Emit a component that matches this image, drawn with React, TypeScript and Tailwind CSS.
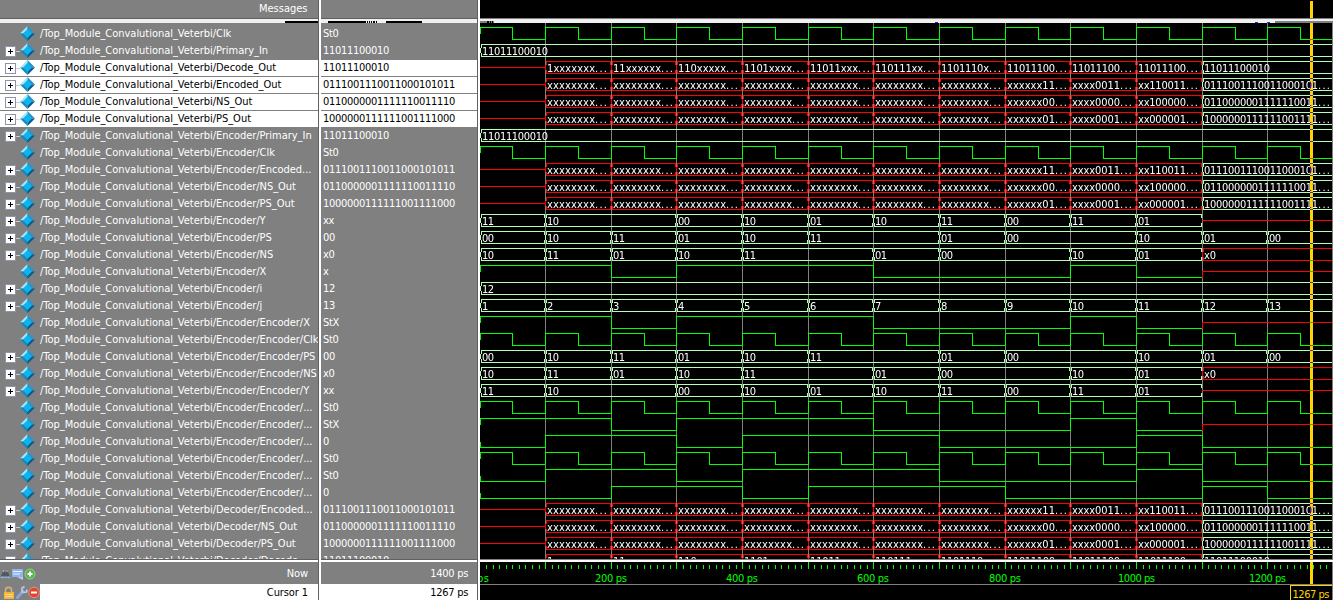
import React from "react";

const FONT = '"DejaVu Sans Condensed", "DejaVu Sans", sans-serif';
const TOP = "/Top_Module_Convalutional_Veterbi/";

type Seg = [number, string, boolean?];
type Wave =
  | { kind: "clk" }
  | { kind: "bit"; start: 0 | 1; edges: number[]; x?: number }
  | { kind: "bus"; segs: Seg[]; from?: number; xFrom?: number };

type Row = { name: string; value: string; wave: Wave; plus?: boolean; white?: boolean };

const clk: Wave = { kind: "clk" };
const xBit: Wave = { kind: "bit", start: 1, edges: [2, 3, 6, 9, 10], x: 11 };
const regA: Wave = { kind: "bit", start: 0, edges: [1, 3, 4, 7, 10, 11] };
const regB: Wave = { kind: "bit", start: 0, edges: [2, 4, 5, 8, 11, 12] };
const primary: Wave = { kind: "bus", segs: [[0, "11011100010"]] };

const unknown = (tail: [string, string, string, string]): Wave => ({
  kind: "bus",
  from: 1,
  segs: [
    ...[1, 2, 3, 4, 5, 6, 7].map((i): Seg => [i, "xxxxxxxx...", true]),
    [8, tail[0], true],
    [9, tail[1], true],
    [10, tail[2], true],
    [11, tail[3]],
  ],
});
const encodedW = unknown(["xxxxxx11...", "xxxx0011...", "xx110011...", "0111001110011000101..."]);
const nsOutW = unknown(["xxxxxx00...", "xxxx0000...", "xx100000...", "0110000001111110011..."]);
const psOutW = unknown(["xxxxxx01...", "xxxx0001...", "xx000001...", "1000000111111001111..."]);
const decodeW: Wave = {
  kind: "bus",
  from: 1,
  segs: [
    [1, "1xxxxxxx...", true],
    [2, "11xxxxxx...", true],
    [3, "110xxxxx...", true],
    [4, "1101xxxx...", true],
    [5, "11011xxx...", true],
    [6, "110111xx...", true],
    [7, "1101110x...", true],
    [8, "11011100...", true],
    [9, "11011100...", true],
    [10, "11011100...", true],
    [11, "11011100010"],
  ],
};
const yW: Wave = {
  kind: "bus",
  xFrom: 11,
  segs: [[0, "11"], [1, "10"], [3, "00"], [4, "10"], [5, "01"], [6, "10"], [7, "11"], [8, "00"], [9, "11"], [10, "01"]],
};
const psW: Wave = {
  kind: "bus",
  segs: [[0, "00"], [1, "10"], [2, "11"], [3, "01"], [4, "10"], [5, "11"], [7, "01"], [8, "00"], [10, "10"], [11, "01"], [12, "00"]],
};
const nsW: Wave = {
  kind: "bus",
  segs: [[0, "10"], [1, "11"], [2, "01"], [3, "10"], [4, "11"], [6, "01"], [7, "00"], [9, "10"], [10, "01"], [11, "x0", true]],
};
const jW: Wave = { kind: "bus", segs: Array.from({ length: 13 }, (_, i): Seg => [i, String(i + 1)]) };

const ENC = "0111001110011000101011";
const NS = "0110000001111110011110";
const PS = "1000000111111001111000";
const PRI = "11011100010";

const rows: Row[] = [
  { name: "Clk", value: "St0", wave: clk },
  { name: "Primary_In", value: PRI, wave: primary, plus: true },
  { name: "Decode_Out", value: PRI, wave: decodeW, plus: true, white: true },
  { name: "Encoded_Out", value: ENC, wave: encodedW, plus: true, white: true },
  { name: "NS_Out", value: NS, wave: nsOutW, plus: true, white: true },
  { name: "PS_Out", value: PS, wave: psOutW, plus: true, white: true },
  { name: "Encoder/Primary_In", value: PRI, wave: primary, plus: true },
  { name: "Encoder/Clk", value: "St0", wave: clk },
  { name: "Encoder/Encoded...", value: ENC, wave: encodedW, plus: true },
  { name: "Encoder/NS_Out", value: NS, wave: nsOutW, plus: true },
  { name: "Encoder/PS_Out", value: PS, wave: psOutW, plus: true },
  { name: "Encoder/Y", value: "xx", wave: yW, plus: true },
  { name: "Encoder/PS", value: "00", wave: psW, plus: true },
  { name: "Encoder/NS", value: "x0", wave: nsW, plus: true },
  { name: "Encoder/X", value: "x", wave: xBit },
  { name: "Encoder/i", value: "12", wave: { kind: "bus", segs: [[0, "12"]] }, plus: true },
  { name: "Encoder/j", value: "13", wave: jW, plus: true },
  { name: "Encoder/Encoder/X", value: "StX", wave: xBit },
  { name: "Encoder/Encoder/Clk", value: "St0", wave: clk },
  { name: "Encoder/Encoder/PS", value: "00", wave: psW, plus: true },
  { name: "Encoder/Encoder/NS", value: "x0", wave: nsW, plus: true },
  { name: "Encoder/Encoder/Y", value: "xx", wave: yW, plus: true },
  { name: "Encoder/Encoder/...", value: "St0", wave: clk },
  { name: "Encoder/Encoder/...", value: "StX", wave: xBit },
  { name: "Encoder/Encoder/...", value: "0", wave: regA },
  { name: "Encoder/Encoder/...", value: "St0", wave: clk },
  { name: "Encoder/Encoder/...", value: "St0", wave: regA },
  { name: "Encoder/Encoder/...", value: "0", wave: regB },
  { name: "Decoder/Encoded...", value: ENC, wave: encodedW, plus: true },
  { name: "Decoder/NS_Out", value: NS, wave: nsOutW, plus: true },
  { name: "Decoder/PS_Out", value: PS, wave: psOutW, plus: true },
  { name: "Decoder/Decode...", value: PRI, wave: decodeW, plus: true },
];

const W = 852;
const GRID = [0, 65, 131, 196, 262, 328, 393, 459, 525, 590, 656, 722, 787];
const HALF = [32, 98, 164, 229, 295, 361, 426, 492, 558, 623, 689, 755, 820];
const GREEN = "#00ff00";
const MINT = "#b4ffb4";
const RED = "#ff0000";

const textWidth = (s: string) => [...s].reduce((w, c) => w + (c === "." ? 4 : 6), 0);

function Value({ x, y, text }: { x: number; y: number; text: string }) {
  const dots = text.endsWith("...");
  const body = dots ? text.slice(0, -3) : text;
  return (
    <>
      <text x={x} y={y} fill="#fff" fontSize={11} textLength={textWidth(body)} lengthAdjust="spacing">
        {body}
      </text>
      {dots && (
        <text x={x + textWidth(body)} y={y} fill="#fff" fontSize={11} textLength={12}>
          ...
        </text>
      )}
    </>
  );
}

function WaveRow({ wave, y }: { wave: Wave; y: number }) {
  const hi = y + 1.5;
  const lo = y + 13.5;
  const mid = y + 7.5;
  if (wave.kind === "clk") {
    let d = `M0.5 ${mid}V${hi}`;
    GRID.forEach((g, i) => {
      if (i > 0) d += `H${g + 0.5}V${hi}`;
      d += `H${HALF[i] + 0.5}V${lo}`;
    });
    return <path d={d + `H${W}`} stroke={GREEN} fill="none" />;
  }
  if (wave.kind === "bit") {
    let level = wave.start;
    let d = `M0.5 ${mid}V${level ? hi : lo}`;
    wave.edges.forEach((e) => {
      level = level ? 0 : 1;
      d += `H${GRID[e] + 0.5}V${level ? hi : lo}`;
    });
    if (wave.x === undefined) return <path d={d + `H${W}`} stroke={GREEN} fill="none" />;
    const x = GRID[wave.x] + 0.5;
    return (
      <>
        <path d={d + `H${x}`} stroke={GREEN} fill="none" />
        <path d={`M${x} ${lo + 0.5}V${mid}H${W}`} stroke={RED} fill="none" />
      </>
    );
  }
  return (
    <>
      {wave.from && <path d={`M0 ${mid}H${GRID[wave.from]}`} stroke={RED} />}
      {wave.segs.map(([g, text, red], i) => {
        const x = GRID[g];
        const next = wave.segs[i + 1]?.[0] ?? wave.xFrom;
        const end = next === undefined ? W : GRID[next];
        const c = red ? RED : MINT;
        const cap = next === undefined ? "" : `M${end - 0.5} ${hi}v3.5M${end - 0.5} ${lo}v-3.5`;
        return (
          <g key={g}>
            <path
              d={`M${x + 1} ${hi}H${end}M${x + 1} ${lo}H${end}M${x + 1.5} ${hi}v3.5M${x + 0.5} ${y + 5}v5M${x + 1.5} ${lo}v-3.5${cap}`}
              stroke={c}
              fill="none"
            />
            <Value x={x + 2} y={y + 12} text={text} />
          </g>
        );
      })}
      {wave.xFrom && <path d={`M${GRID[wave.xFrom]} ${mid}H${W}`} stroke={RED} />}
    </>
  );
}

function Waves() {
  return (
    <svg width={853} height={536} viewBox="0 23 853 536" className="isolate block" shapeRendering="crispEdges" fontFamily={FONT}>
      <path d="M0 23H853V559H0z" fill="#000" />
      {GRID.slice(1).map((g) => (
        <path key={g} d={`M${g + 0.5} 23V559`} stroke="#808080" />
      ))}
      {rows.map((r, i) => (
        <WaveRow key={i} wave={r.wave} y={26 + 17 * i} />
      ))}
      <path d="M830 23h3V559h-3z" fill="#ffd400" className="mix-blend-difference" />
      <path d="M852.5 23V559" stroke="#808080" />
    </svg>
  );
}

function Ruler() {
  const ticks: number[] = [];
  for (let t = 10; t < 1300; t += 10) ticks.push(t);
  return (
    <svg width={853} height={38} viewBox="0 562 853 38" className="block" shapeRendering="crispEdges" fontFamily={FONT}>
      {ticks.map((t) => {
        const x = Math.floor(t * 0.6565) + 0.5;
        return t % 100 === 0 ? (
          <path key={t} d={`M${GRID[t / 100] + 0.5} 562V569`} stroke={GREEN} />
        ) : (
          <path key={t} d={`M${x} 565V569`} stroke={GREEN} />
        );
      })}
      <text x={-3} y={582} fill={GREEN} fontSize={11} textLength={12}>ps</text>
      {[200, 400, 600, 800, 1000, 1200].map((t) => {
        const w = t < 1000 ? 32 : 37;
        return (
          <text key={t} x={GRID[t / 100] - (t < 1000 ? 16 : 18)} y={582} fill={GREEN} fontSize={11} textLength={w}>
            {t} ps
          </text>
        );
      })}
      <path d="M0 584.5H853" stroke="#808080" />
      <path d="M830 562h3V584h-3z" fill="#ffd400" />
      <path d="M810.5 600V585.5H853" stroke="#ffd400" fill="none" />
      <text x={812.5} y={598} fill="#ffd400" fontSize={11} textLength={37}>1267 ps</text>
      <path d="M852.5 562V600" stroke="#808080" />
    </svg>
  );
}

function Diamond() {
  return (
    <svg width={15} height={15} viewBox="0 0 15 15" className="block shrink-0">
      <path d="M7.5 0L0 7.5H7.5z" fill="#a6e6fa" />
      <path d="M7.5 0L15 7.5H7.5z" fill="#2496cc" />
      <path d="M0 7.5L7.5 15V7.5z" fill="#1787b8" />
      <path d="M15 7.5L7.5 15V7.5z" fill="#0a5a86" />
      <path d="M7.5 3L12 7.5L7.5 12L3 7.5z" fill="#0fb4ee" />
    </svg>
  );
}

function Plus() {
  return (
    <svg width={15} height={11} viewBox="0 0 15 11" className="block" shapeRendering="crispEdges">
      <path d="M11 5.5H15" stroke="#c4d0d8" />
      <rect x={0.5} y={0.5} width={10} height={10} fill="#fff" stroke="#8e94ae" />
      <path d="M3 5.5h5M5.5 3v5" stroke="#000" />
    </svg>
  );
}

function NowIcons() {
  return (
    <svg width={40} height={21} viewBox="0 562 40 21" className="block shrink-0">
      <path d="M1 575l2.500-6 2 3 1.500-4 2.500 7z" fill="#4f5964" />
      <path d="M1 576.500h9M2 577.500l-1-1 1-1M9 577.500l1-1-1-1" stroke="#7fb0e0" fill="none" />
      <path d="M3 571l1-2M7 571v-2" stroke="#b7c2cf" />
      <rect x={12} y={568} width={11} height={8} fill="#8fb4ec" />
      <path d="M13 570.500h9M13 573h7" stroke="#e8f1ff" />
      <path d="M17 576h6v3z" fill="#b8cff4" />
      <circle cx={30} cy={573} r={5} fill="#55b545" stroke="#a0dc92" strokeWidth={0.8} />
      <path d="M27.5 573h5M30 570.5v5" stroke="#fff" strokeWidth={2} />
    </svg>
  );
}

function CursorIcons() {
  return (
    <svg width={40} height={17} viewBox="0 584 40 17" className="block shrink-0">
      <path d="M5.5 592v-2a3 2.6 0 0 1 6 0v2" fill="none" stroke="#d2b070" strokeWidth={1.6} />
      <rect x={4} y={592} width={10} height={7} fill="#f4b23c" />
      <path d="M5 594.5h8M5 596.5h8" stroke="#fbdc8a" />
      <path d="M17.5 597.5L23 591" stroke="#7fa6e6" strokeWidth={3} strokeLinecap="round" />
      <path d="M22 592.5V588l2.5-1.5M22.5 592.5l4-.5.5-2.5" stroke="#b8cdf0" strokeWidth={1.6} fill="none" />
      <circle cx={34} cy={592.5} r={5.2} fill="#e0452f" stroke="#f19a8c" strokeWidth={0.8} />
      <path d="M31 592.5h6" stroke="#fff" strokeWidth={2} />
    </svg>
  );
}

export default function App() {
  return (
    <div
      className="flex h-[600px] w-[1335px] overflow-hidden bg-white text-[11px] leading-[17px] whitespace-pre"
      style={{ fontFamily: FONT }}
    >
      <section className="flex w-[319px] shrink-0 flex-col border-r border-[#606060]">
        <header className="flex h-[19px] shrink-0 justify-end border-b border-[#606060] bg-[#808080] pr-[10.5px] text-white">
          Messages
        </header>
        <div className="flex h-1 shrink-0 items-end justify-end bg-[#f0f0f0]">
          <i className="h-0.5 w-[33px] bg-black" />
        </div>
        <div className="h-[536px] shrink-0 overflow-hidden bg-[#808080] pt-[3px]">
          {rows.map((r, i) => (
            <div
              key={i}
              className={`flex h-[17px] ${r.white ? "border-b border-[#808080] bg-white text-black" : "text-white"}`}
            >
              <div className="flex w-5 shrink-0 justify-end pt-[3px]">{r.plus && <Plus />}</div>
              <div className="w-5 shrink-0"><Diamond /></div>
              <span className="-mt-px tracking-[-0.03px]">{TOP + r.name}</span>
            </div>
          ))}
        </div>
        <div className="h-[3px] shrink-0 border-t border-[#606060] bg-white" />
        <div className="flex h-[22px] shrink-0 items-center justify-between bg-[#808080] pr-[10px] text-white">
          <NowIcons />
          <span className="tracking-[-0.1px]">Now</span>
        </div>
        <div className="flex h-4 shrink-0 bg-white text-black">
          <div className="w-10 shrink-0 bg-[#808080]"><CursorIcons /></div>
          <span className="grow pr-[10px] text-right tracking-[-0.1px]">Cursor 1</span>
        </div>
      </section>

      <section className="ml-0.5 flex w-[157px] shrink-0 flex-col border-r border-[#606060]">
        <header className="h-[19px] shrink-0 border-b border-[#606060] bg-[#808080]" />
        <div className="flex h-1 shrink-0 items-end bg-[#f0f0f0] pl-[7px]">
          <i className="h-0.5 w-[38px] bg-black" />
          <i className="ml-px h-0.5 w-px bg-black" />
          <i className="ml-px h-0.5 w-px bg-black" />
          <i className="ml-px h-0.5 w-px bg-black" />
          <i className="ml-px h-0.5 w-0.5 bg-black" />
          <i className="ml-px h-0.5 w-px bg-black" />
          <i className="ml-[9px] h-0.5 w-9 bg-black" />
        </div>
        <div className="h-[536px] shrink-0 overflow-hidden bg-[#808080] pt-[3px]">
          {rows.map((r, i) => (
            <div
              key={i}
              className={`h-[17px] pl-0.5 ${r.white ? "border-b border-[#808080] bg-white text-black" : "text-white"}`}
            >
              <span className="relative -top-px tracking-[-0.3px]">{r.value}</span>
            </div>
          ))}
        </div>
        <div className="h-[3px] shrink-0 border-t border-[#606060] bg-white" />
        <div className="flex h-[22px] shrink-0 items-center justify-end bg-[#808080] pr-[9px] tracking-[-0.3px] text-white">1400 ps</div>
        <div className="h-4 shrink-0 bg-white pr-[9px] text-right tracking-[-0.3px] text-black">1267 ps</div>
      </section>

      <section className="ml-0.5 flex w-[853px] shrink-0 flex-col bg-black">
        <div className="flex h-[18px] shrink-0 pt-px pl-[830px]">
          <i className="w-[3px] bg-[#ffd400]" />
        </div>
        <div className="h-px shrink-0 bg-[#808080]" />
        <div className="flex h-1 shrink-0 items-end bg-[#f0f0f0]">
          <i className="h-0.5 w-[7px] bg-[#808080]" />
          <i className="h-0.5 w-0.5 bg-black" />
          <i className="h-0.5 w-px bg-[#808080]" />
          <i className="h-0.5 w-px bg-black" />
          <i className="h-0.5 w-px bg-[#808080]" />
          <i className="h-0.5 w-px bg-black" />
          <i className="h-0.5 w-px bg-[#808080]" />
          <i className="ml-[441px] h-px w-[3px] bg-[#2020ff]" />
          <i className="ml-[317px] h-px w-[3px] bg-[#2020ff]" />
          <i className="ml-[9px] h-px w-[3px] bg-[#2020ff]" />
          <i className="ml-[5px] h-0.5 w-[58px] bg-[#808080]" />
        </div>
        <Waves />
        <div className="h-[3px] shrink-0 border-t border-[#808080] bg-white" />
        <Ruler />
      </section>
    </div>
  );
}
